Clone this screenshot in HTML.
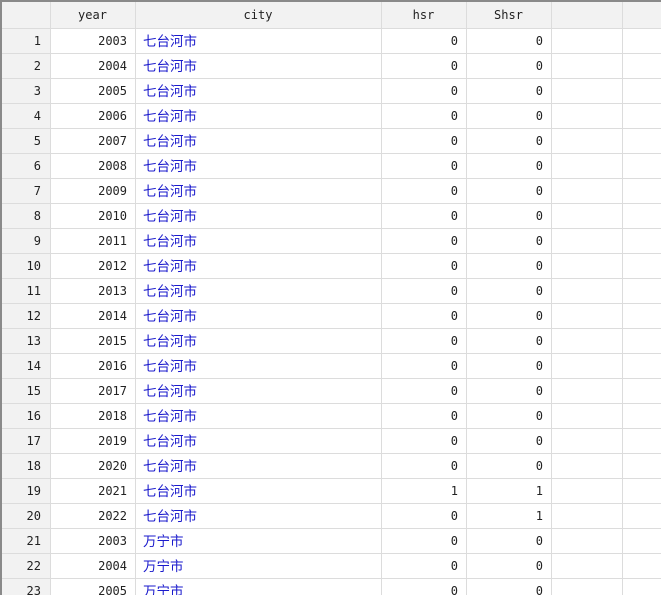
<!DOCTYPE html>
<html><head><meta charset="utf-8"><style>
html,body{margin:0;width:661px;height:595px;overflow:hidden}
body{background:#fff;font-family:"DejaVu Sans Mono","Liberation Mono","Noto Sans CJK SC",monospace;font-size:12px;color:#222;position:relative}
.abs{position:absolute}
.hlines{position:absolute;left:0;top:28px;width:661px;height:567px;background:repeating-linear-gradient(to bottom,#dcdcdc 0 1px,transparent 1px 25px)}
.v{position:absolute;top:2px;width:1px;height:593px;background:#dcdcdc}
.row{position:absolute;left:0;width:661px;height:24px;line-height:25px}
.row span{position:absolute;top:0;white-space:nowrap}
.n{left:0;width:41px;text-align:right}
.y{left:50px;width:77px;text-align:right}
.c{left:143px;color:#1a1acc;font-family:"Liberation Sans","Noto Sans CJK SC",sans-serif;font-size:13.5px}
.h1{left:381px;width:77px;text-align:right}
.h2{left:466px;width:77px;text-align:right}
</style></head><body>
<div class="abs" style="left:0;top:2px;width:50px;height:593px;background:#f2f2f2"></div>
<div class="abs" style="left:0;top:2px;width:661px;height:26px;background:#f2f2f2"></div>
<div class="hlines"></div>
<div class="v" style="left:50px"></div><div class="v" style="left:135px"></div><div class="v" style="left:381px"></div><div class="v" style="left:466px"></div><div class="v" style="left:551px"></div><div class="v" style="left:622px"></div>
<div class="row" style="top:3px"><span style="left:50px;width:85px;text-align:center">year</span><span style="left:135px;width:246px;text-align:center">city</span><span style="left:381px;width:85px;text-align:center">hsr</span><span style="left:466px;width:85px;text-align:center">Shsr</span></div>
<div class="row" style="top:29px"><span class="n">1</span><span class="y">2003</span><span class="c">七台河市</span><span class="h1">0</span><span class="h2">0</span></div>
<div class="row" style="top:54px"><span class="n">2</span><span class="y">2004</span><span class="c">七台河市</span><span class="h1">0</span><span class="h2">0</span></div>
<div class="row" style="top:79px"><span class="n">3</span><span class="y">2005</span><span class="c">七台河市</span><span class="h1">0</span><span class="h2">0</span></div>
<div class="row" style="top:104px"><span class="n">4</span><span class="y">2006</span><span class="c">七台河市</span><span class="h1">0</span><span class="h2">0</span></div>
<div class="row" style="top:129px"><span class="n">5</span><span class="y">2007</span><span class="c">七台河市</span><span class="h1">0</span><span class="h2">0</span></div>
<div class="row" style="top:154px"><span class="n">6</span><span class="y">2008</span><span class="c">七台河市</span><span class="h1">0</span><span class="h2">0</span></div>
<div class="row" style="top:179px"><span class="n">7</span><span class="y">2009</span><span class="c">七台河市</span><span class="h1">0</span><span class="h2">0</span></div>
<div class="row" style="top:204px"><span class="n">8</span><span class="y">2010</span><span class="c">七台河市</span><span class="h1">0</span><span class="h2">0</span></div>
<div class="row" style="top:229px"><span class="n">9</span><span class="y">2011</span><span class="c">七台河市</span><span class="h1">0</span><span class="h2">0</span></div>
<div class="row" style="top:254px"><span class="n">10</span><span class="y">2012</span><span class="c">七台河市</span><span class="h1">0</span><span class="h2">0</span></div>
<div class="row" style="top:279px"><span class="n">11</span><span class="y">2013</span><span class="c">七台河市</span><span class="h1">0</span><span class="h2">0</span></div>
<div class="row" style="top:304px"><span class="n">12</span><span class="y">2014</span><span class="c">七台河市</span><span class="h1">0</span><span class="h2">0</span></div>
<div class="row" style="top:329px"><span class="n">13</span><span class="y">2015</span><span class="c">七台河市</span><span class="h1">0</span><span class="h2">0</span></div>
<div class="row" style="top:354px"><span class="n">14</span><span class="y">2016</span><span class="c">七台河市</span><span class="h1">0</span><span class="h2">0</span></div>
<div class="row" style="top:379px"><span class="n">15</span><span class="y">2017</span><span class="c">七台河市</span><span class="h1">0</span><span class="h2">0</span></div>
<div class="row" style="top:404px"><span class="n">16</span><span class="y">2018</span><span class="c">七台河市</span><span class="h1">0</span><span class="h2">0</span></div>
<div class="row" style="top:429px"><span class="n">17</span><span class="y">2019</span><span class="c">七台河市</span><span class="h1">0</span><span class="h2">0</span></div>
<div class="row" style="top:454px"><span class="n">18</span><span class="y">2020</span><span class="c">七台河市</span><span class="h1">0</span><span class="h2">0</span></div>
<div class="row" style="top:479px"><span class="n">19</span><span class="y">2021</span><span class="c">七台河市</span><span class="h1">1</span><span class="h2">1</span></div>
<div class="row" style="top:504px"><span class="n">20</span><span class="y">2022</span><span class="c">七台河市</span><span class="h1">0</span><span class="h2">1</span></div>
<div class="row" style="top:529px"><span class="n">21</span><span class="y">2003</span><span class="c">万宁市</span><span class="h1">0</span><span class="h2">0</span></div>
<div class="row" style="top:554px"><span class="n">22</span><span class="y">2004</span><span class="c">万宁市</span><span class="h1">0</span><span class="h2">0</span></div>
<div class="row" style="top:579px"><span class="n">23</span><span class="y">2005</span><span class="c">万宁市</span><span class="h1">0</span><span class="h2">0</span></div>
<div class="abs" style="left:0;top:0;width:661px;height:2px;background:#8a8a8a"></div>
<div class="abs" style="left:0;top:0;width:2px;height:595px;background:#8a8a8a"></div>
</body></html>
